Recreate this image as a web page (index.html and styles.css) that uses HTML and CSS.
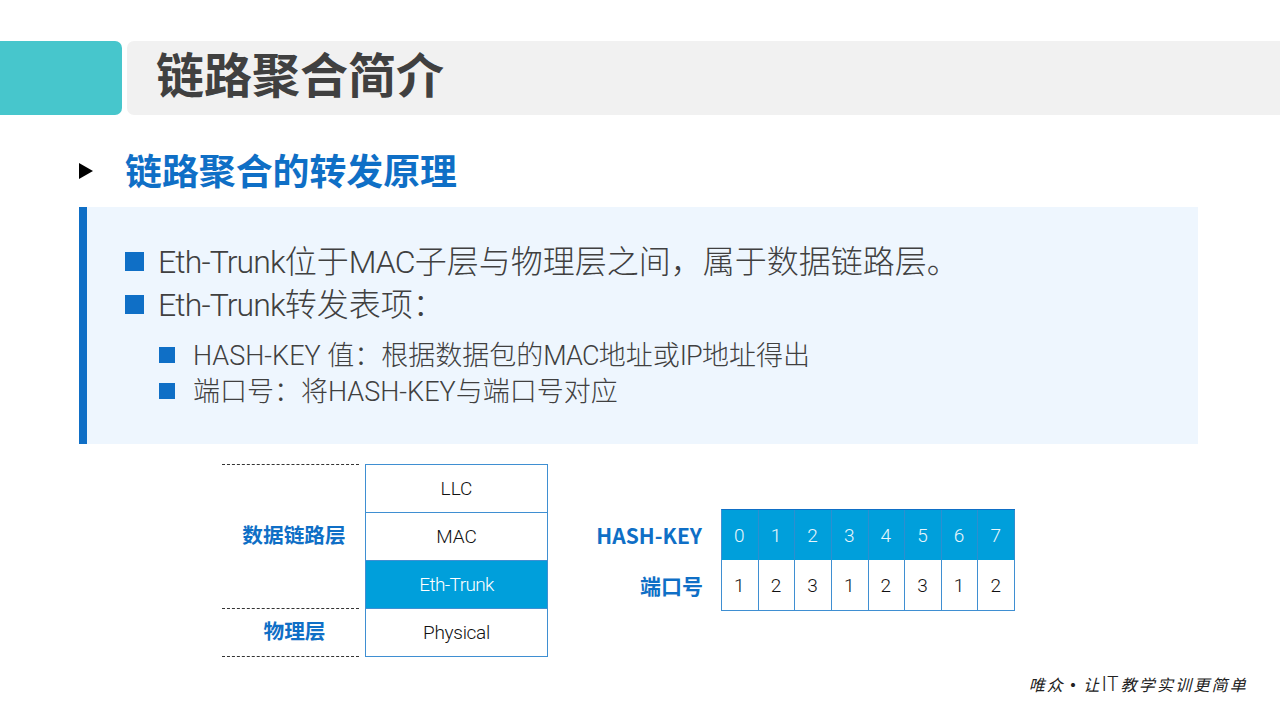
FILE: index.html
```html
<!DOCTYPE html>
<html lang="zh-CN">
<head>
<meta charset="utf-8">
<title>链路聚合简介</title>
<link rel="stylesheet" href="styles.css">
</head>
<body>
<div class="slide">
  <header class="header">
    <div class="accent"></div>
    <div class="title-bar"><h1 class="title">链路聚合简介</h1></div>
  </header>
  <div class="subhead">
    <span class="arrow"></span>
    <h2 class="subtitle">链路聚合的转发原理</h2>
  </div>
  <section class="panel">
    <ul class="list-main">
      <li class="item-main"><span class="sq-main"></span><span class="txt"><span class="lat">Eth-Trunk</span>位于<span class="lat">MAC</span>子层与物理层之间，属于数据链路层。</span></li>
      <li class="item-main"><span class="sq-main"></span><span class="txt"><span class="lat">Eth-Trunk</span>转发表项：</span></li>
    </ul>
    <ul class="list-sub">
      <li class="item-sub"><span class="sq-sub"></span><span class="txt">HASH-KEY 值：根据数据包的<span class="lat-sub">MAC</span>地址或<span class="lat-sub">IP</span>地址得出</span></li>
      <li class="item-sub"><span class="sq-sub"></span><span class="txt">端口号：将HASH-KEY与端口号对应</span></li>
    </ul>
  </section>
  <section class="diagram">
    <div class="layer-labels">
      <div class="label-dl"><span class="lbl">数据链路层</span></div>
      <div class="label-ph"><span class="lbl">物理层</span></div>
    </div>
    <div class="stack">
      <div class="stack-row">LLC</div>
      <div class="stack-row">MAC</div>
      <div class="stack-row stack-hl">Eth-Trunk</div>
      <div class="stack-row stack-tight">Physical</div>
    </div>
    <div class="hash">
      <div class="hash-labels">
        <div class="hash-label hash-key">HASH-KEY</div>
        <div class="hash-label hash-port">端口号</div>
      </div>
      <div class="hash-grid">
        <div class="cell cell-h">0</div><div class="cell cell-h">1</div><div class="cell cell-h">2</div><div class="cell cell-h">3</div><div class="cell cell-h">4</div><div class="cell cell-h">5</div><div class="cell cell-h">6</div><div class="cell cell-h">7</div>
        <div class="cell">1</div><div class="cell">2</div><div class="cell">3</div><div class="cell">1</div><div class="cell">2</div><div class="cell">3</div><div class="cell">1</div><div class="cell">2</div>
      </div>
    </div>
  </section>
  <footer class="footer">唯众<span class="dot">•</span>让<span class="it">IT</span>教学实训更简单</footer>
</div>
</body>
</html>
```

FILE: styles.css
```css
* { box-sizing: border-box; margin: 0; padding: 0; }
html, body { width: 1280px; height: 720px; overflow: hidden; background: #fff; }
body { font-family: "Roboto", "Noto Sans CJK SC", sans-serif; }
.slide { width: 1280px; height: 720px; padding-top: 41px; display: flex; flex-direction: column; }
.header { display: flex; height: 74px; gap: 5px; }
.accent { width: 122px; background: #47c6cc; border-radius: 0 7px 7px 0; }
.title-bar { flex: 1; background: #f1f1f1; border-radius: 7px 0 0 7px; padding: 0 0 13px 29px; display: flex; align-items: center; }
.title { font-family: "Noto Sans CJK SC", sans-serif; font-size: 48px; font-weight: 700; color: #404040; line-height: 64px; }
.subhead { display: flex; align-items: center; height: 60px; margin-top: 26px; padding-left: 79px; }
.arrow { width: 0; height: 0; border-left: 14px solid #000; border-top: 8px solid transparent; border-bottom: 8px solid transparent; }
.subtitle { margin-left: 32px; padding-bottom: 4px; font-family: "Noto Sans CJK SC", sans-serif; font-size: 36.9px; font-weight: 700; color: #0f6fc6; line-height: 50px; }
.panel { margin: 6px 82px 0 79px; height: 237px; background: #eef6fe; border-left: 8px solid #0f6fc6; padding: 33px 0 0 38px; color: #404040; }
.list-main, .list-sub { list-style: none; }
.txt { padding-bottom: 6px; }
.lat { letter-spacing: -0.9px; }
.lat-sub { letter-spacing: -0.8px; }
.item-main { display: flex; align-items: center; height: 43px; font-size: 32px; font-weight: 300; }
.sq-main { width: 19px; height: 19px; background: #0f6fc6; margin-right: 14px; flex: none; }
.list-sub { margin: 11px 0 0 34px; }
.item-sub { display: flex; align-items: center; height: 36px; font-size: 27px; font-weight: 300; }
.item-sub .txt { padding-bottom: 4px; }
.sq-sub { width: 16px; height: 16px; background: #0f6fc6; margin-right: 18px; flex: none; }
.diagram { display: flex; align-items: flex-start; margin: 20px 0 0 222px; }
.layer-labels { width: 137px; display: flex; flex-direction: column; font-family: "Noto Sans CJK SC", sans-serif; font-weight: 700; font-size: 20.7px; color: #0f6fc6; }
.lbl { padding-bottom: 6px; }
.label-dl { height: 144px; border-top: 1px dashed #333; display: flex; align-items: center; justify-content: center; padding-left: 7px; }
.label-ph { height: 49px; border-top: 1px dashed #333; border-bottom: 1px dashed #333; display: flex; align-items: center; justify-content: center; padding-left: 8px; }
.stack { margin-left: 6px; width: 183px; border: 1px solid #3f8fd2; }
.stack-row { height: 48px; display: flex; align-items: center; justify-content: center; font-size: 19px; font-weight: 300; color: #111; border-top: 1px solid #3f8fd2; }
.stack-row:first-child { border-top: 0; height: 47px; }
.stack-hl { background: #009fdb; color: #fff; letter-spacing: -0.6px; }
.stack-tight { letter-spacing: -0.3px; }
.hash { display: flex; margin: 45px 0 0 0; flex: none; }
.hash-labels { width: 154px; display: flex; flex-direction: column; font-family: "Noto Sans CJK SC", sans-serif; font-weight: 700; font-size: 21px; color: #0f6fc6; }
.hash-label { height: 50px; display: flex; align-items: center; justify-content: flex-end; }
.hash-key { padding-top: 1px; }
.hash-port { padding-top: 2px; margin-right: -1px; }
.hash-grid { margin-left: 19px; width: 294px; display: grid; grid-template-columns: repeat(8, 1fr); grid-template-rows: 50px 51px; border-top: 1px solid #0f6fc6; border-left: 1px solid #3f8fd2; }
.cell { display: flex; align-items: center; justify-content: center; padding-right: 1px; font-size: 19px; font-weight: 300; color: #111; border-right: 1px solid #3f8fd2; border-bottom: 1px solid #3f8fd2; }
.cell-h { background: #009fdb; color: #e8f6fc; border-bottom: 0; border-right-color: #2e8ecf; }
.footer { margin: 12px 32px 0 0; text-align: right; font-family: "Noto Sans CJK SC", sans-serif; font-size: 16px; font-weight: 400; letter-spacing: 2.2px; color: #222; font-style: italic; line-height: 28px; }
.dot { font-style: normal; font-weight: 700; }
.it { font-size: 20px; font-style: normal; font-weight: 300; letter-spacing: 0; padding-right: 2px; }
```
